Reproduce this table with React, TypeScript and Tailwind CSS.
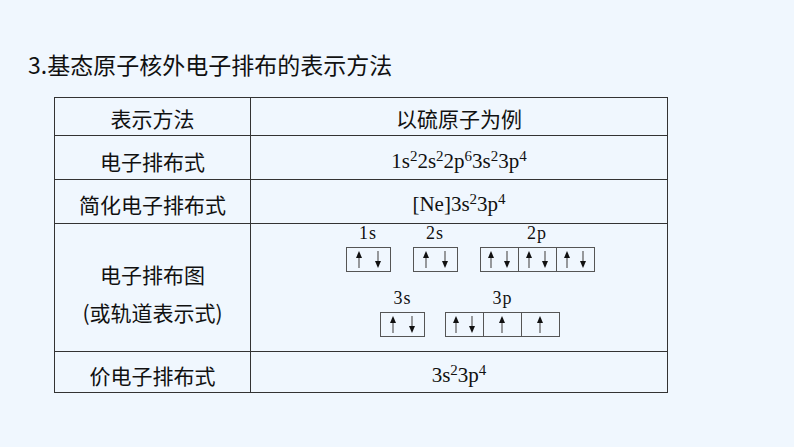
import React from "react";

const cjk = "font-[family-name:'Noto_Sans_CJK_SC','Noto_Sans',sans-serif]";
const serif = "font-[family-name:'Liberation_Serif','Times_New_Roman',serif]";

function Arrow({ dir, x, h }: { dir: "up" | "down"; x: number; h: number }) {
    // thin gray shaft with a small black head
    const top = 4;
    const bottom = h - 3;
    return dir === "up" ? (
        <g>
            <line x1={x} y1={top + 4} x2={x} y2={bottom} stroke="#666" strokeWidth="1.3" />
            <path d={`M${x - 3} ${top + 7} L${x} ${top} L${x + 3} ${top + 7} Z`} fill="#111" />
        </g>
    ) : (
        <g>
            <line x1={x} y1={top} x2={x} y2={bottom - 4} stroke="#666" strokeWidth="1.3" />
            <path d={`M${x - 3} ${bottom - 7} L${x} ${bottom} L${x + 3} ${bottom - 7} Z`} fill="#111" />
        </g>
    );
}

// cells: each entry is the spins in that orbital box
function Orbital({ label, cells, cellW, h }: { label: string; cells: ("ud" | "u")[]; cellW: number; h: number }) {
    const w = cells.length * cellW;
    return (
        <div className="flex flex-col items-center">
            <div className={`${serif} text-[18px] leading-[18px] tracking-[1px] text-[#111] mb-[5px]`}>{label}</div>
            <svg width={w + 1} height={h + 1} className="block">
                <rect x="0.5" y="0.5" width={w} height={h} fill="none" stroke="#555" strokeWidth="1" />
                {cells.map((c, i) => (
                    <g key={i}>
                        {i > 0 && <line x1={i * cellW + 0.5} y1="0.5" x2={i * cellW + 0.5} y2={h + 0.5} stroke="#555" />}
                        {c === "ud" ? (
                            <>
                                <Arrow dir="up" x={i * cellW + Math.round(cellW * 0.3)} h={h} />
                                <Arrow dir="down" x={i * cellW + Math.round(cellW * 0.72)} h={h} />
                            </>
                        ) : (
                            <Arrow dir="up" x={i * cellW + Math.round(cellW / 2)} h={h} />
                        )}
                    </g>
                ))}
            </svg>
        </div>
    );
}

function Formula({ parts }: { parts: [string, string?][] }) {
    return (
        <span className={`${serif} text-[21px] text-[#111]`}>
            {parts.map(([b, s], i) => (
                <React.Fragment key={i}>
                    {b}
                    {s && <sup className="text-[15px] -top-[0.45em]">{s}</sup>}
                </React.Fragment>
            ))}
        </span>
    );
}

export default function App() {
    const cell = "border border-[#333] text-center align-middle";
    const label = `${cjk} text-[21px] text-[#111]`;

    return (
        <div className="w-[794px] h-[447px] bg-[#f0f7fe] overflow-hidden">
            <h1 className={`${cjk} text-[23px] leading-[33px] text-[#111] pl-[28px] pt-[48px] font-normal`}>
                3.基态原子核外电子排布的表示方法
            </h1>

            <table className="ml-[54px] mt-[16px] border-collapse w-[614px]">
                <tbody>
                    <tr className="h-[38px]">
                        <td className={`${cell} w-[196px] pt-[5px] ${label}`}>表示方法</td>
                        <td className={`${cell} pt-[5px] ${label}`}>以硫原子为例</td>
                    </tr>
                    <tr className="h-[44px]">
                        <td className={`${cell} pt-[8px] ${label}`}>电子排布式</td>
                        <td className={`${cell} pt-[8px]`}>
                            <Formula parts={[["1s", "2"], ["2s", "2"], ["2p", "6"], ["3s", "2"], ["3p", "4"]]} />
                        </td>
                    </tr>
                    <tr className="h-[44px]">
                        <td className={`${cell} pt-[6px] ${label}`}>简化电子排布式</td>
                        <td className={`${cell} pt-[6px]`}>
                            <Formula parts={[["[Ne]3s", "2"], ["3p", "4"]]} />
                        </td>
                    </tr>
                    <tr className="h-[128px]">
                        <td className={`${cell} pt-[10px] ${label} leading-[38px]`}>
                            电子排布图
                            <br />
                            (或轨道表示式)
                        </td>
                        <td className={`${cell} align-top`}>
                            <div className="flex flex-col items-center pl-[22px] pt-[0px] gap-[17px]">
                                <div className="flex items-end gap-[22px]">
                                    <Orbital label="1s" cells={["ud"]} cellW={44} h={24} />
                                    <Orbital label="2s" cells={["ud"]} cellW={44} h={24} />
                                    <Orbital label="2p" cells={["ud", "ud", "ud"]} cellW={38} h={24} />
                                </div>
                                <div className="flex items-end gap-[20px]">
                                    <Orbital label="3s" cells={["ud"]} cellW={44} h={24} />
                                    <Orbital label="3p" cells={["ud", "u", "u"]} cellW={38} h={24} />
                                </div>
                            </div>
                        </td>
                    </tr>
                    <tr className="h-[39px]">
                        <td className={`${cell} pt-[8px] ${label}`}>价电子排布式</td>
                        <td className={`${cell} pt-[8px]`}>
                            <Formula parts={[["3s", "2"], ["3p", "4"]]} />
                        </td>
                    </tr>
                </tbody>
            </table>
        </div>
    );
}
